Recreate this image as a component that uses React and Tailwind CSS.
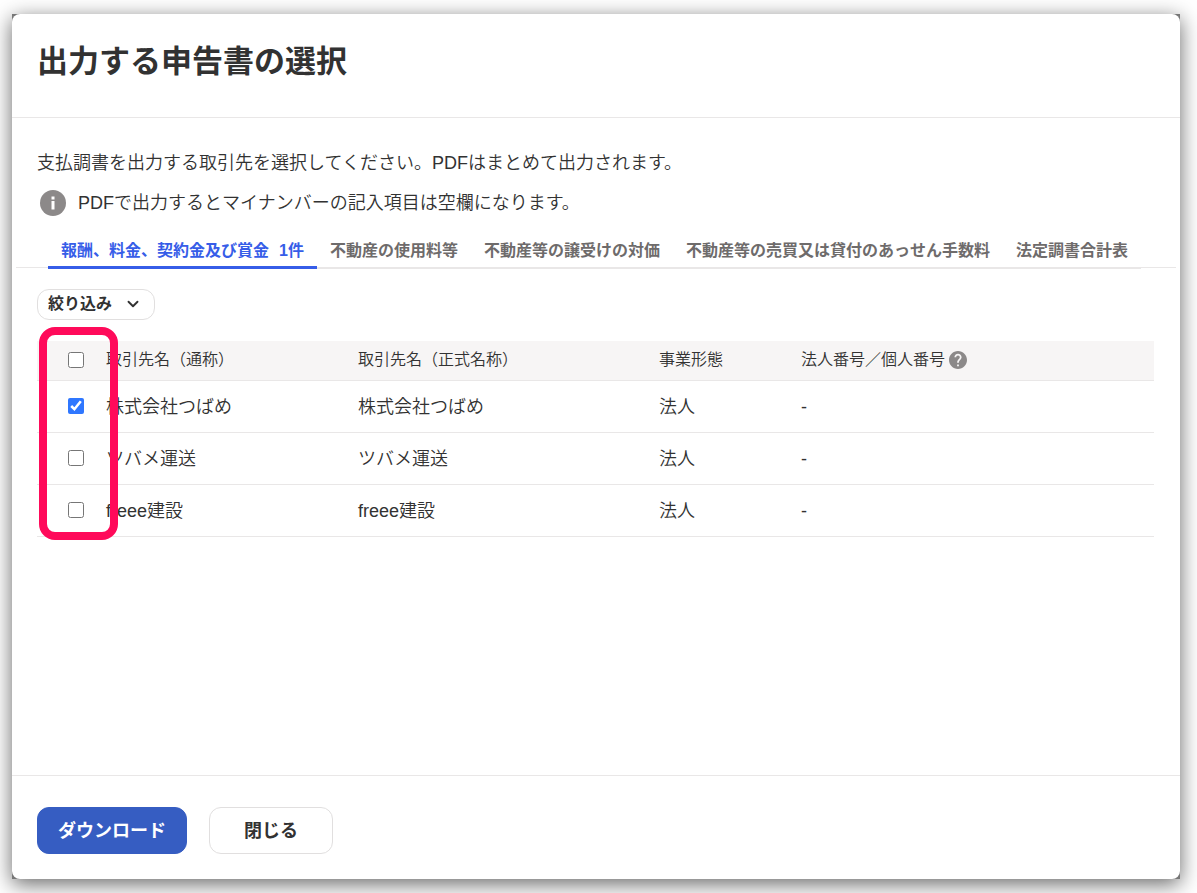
import { useState } from 'react';
import { ChevronDown } from 'lucide-react';

const tabs = [
  { id: 'fee', label: '報酬、料金、契約金及び賞金', count: '1件' },
  { id: 'rent', label: '不動産の使用料等' },
  { id: 'transfer', label: '不動産等の譲受けの対価' },
  { id: 'broker', label: '不動産等の売買又は貸付のあっせん手数料' },
  { id: 'total', label: '法定調書合計表' },
];

const partners = [
  { id: 1, name: '株式会社つばめ', official: '株式会社つばめ', type: '法人', number: '-' },
  { id: 2, name: 'ツバメ運送', official: 'ツバメ運送', type: '法人', number: '-' },
  { id: 3, name: 'freee建設', official: 'freee建設', type: '法人', number: '-' },
];

function InfoIcon() {
  return (
    <svg viewBox="0 0 26 26" className="w-[26px] h-[26px] shrink-0" aria-hidden="true">
      <circle cx="13" cy="13" r="13" fill="#8c8989" />
      <rect x="11.5" y="6.5" width="3" height="3" fill="#fff" />
      <rect x="11.5" y="11" width="3" height="8.5" fill="#fff" />
    </svg>
  );
}

function HelpIcon() {
  return (
    <svg viewBox="2 2 20 20" className="w-[18px] h-[18px]" aria-hidden="true">
      <path
        fill="#8c8989"
        d="M12 2C6.48 2 2 6.48 2 12s4.48 10 10 10 10-4.48 10-10S17.52 2 12 2zm1 17h-2v-2h2v2zm2.07-7.75-.9.92C13.45 12.9 13 13.5 13 15h-2v-.5c0-1.1.45-2.1 1.17-2.83l1.24-1.26c.37-.36.59-.86.59-1.41 0-1.1-.9-2-2-2s-2 .9-2 2H8c0-2.21 1.79-4 4-4s4 1.79 4 4c0 .88-.36 1.68-.93 2.25z"
      />
    </svg>
  );
}

export default function App() {
  const [activeTab, setActiveTab] = useState('fee');
  const [selected, setSelected] = useState([1]);

  const toggle = (id) =>
    setSelected(selected.includes(id) ? selected.filter(s => s !== id) : [...selected, id]);

  const toggleAll = () =>
    setSelected(selected.length === partners.length ? [] : partners.map(p => p.id));

  return (
    <div className="min-h-screen flex flex-col bg-white pt-3.5 pb-3.5 pl-3 pr-[17px] overflow-hidden text-[#323232] text-[18px] font-['Liberation_Sans','Noto_Sans_CJK_JP',sans-serif]">
      <div className="flex-1 flex flex-col bg-[#777777] shadow-[0_5px_20px_rgba(0,0,0,0.6)]">
        <div className="flex-1 flex flex-col bg-white rounded-lg">
          <header className="px-[25px] pt-6 pb-[31px] border-b border-[#e9e7e7]">
            <h1 className="text-[31px] leading-[48px] font-bold">出力する申告書の選択</h1>
          </header>

          <main className="flex-1 pt-[25px]">
            <div className="px-[25px] font-[350]">
              <p className="leading-10">支払調書を出力する取引先を選択してください。PDFはまとめて出力されます。</p>
              <p className="flex items-center gap-3 pl-[3px] leading-10">
                <InfoIcon />
                PDFで出力するとマイナンバーの記入項目は空欄になります。
              </p>
            </div>

            {/* Tabs */}
            <nav className="mt-[11px] mx-1 px-8 border-b border-[#e9e7e7]">
              <div role="tablist" className="flex -mb-0.5">
                {tabs.map(tab => (
                  <button
                    key={tab.id}
                    role="tab"
                    aria-selected={tab.id === activeTab}
                    onClick={() => setActiveTab(tab.id)}
                    className={
                      tab.id === activeTab
                        ? 'h-[35px] px-[13px] pt-0.5 flex items-center gap-2.5 border-b-[3px] border-[#365de8] text-[#365de8] text-[16px] font-bold whitespace-nowrap'
                        : 'h-[35px] px-[13px] pt-px flex items-center border-b-2 border-[#e9e7e7] text-[#6e6b6b] text-[16px] font-bold whitespace-nowrap'
                    }
                  >
                    <span>{tab.label}</span>
                    {tab.count && <span>{tab.count}</span>}
                  </button>
                ))}
              </div>
            </nav>

            <div className="pl-[25px] pr-[26px] pt-[21px]">
              <button className="h-[31px] pl-2.5 pr-3 pb-px flex items-center gap-3 border border-[#e1dfdf] rounded-xl text-[16px] font-bold">
                絞り込み
                <ChevronDown className="w-[18px] h-[18px]" strokeWidth={2.5} />
              </button>

              {/* Partner list */}
              <div className="relative mt-[21px]">
                <table className="w-full table-fixed border-collapse text-left font-[350]">
                  <thead>
                    <tr className="h-[39px] bg-[#f7f5f5] border-b border-[#e9e7e7] text-[16px]">
                      <th className="w-[69px] pl-[31px]">
                        <input
                          type="checkbox"
                          aria-label="すべて選択"
                          className="block w-4 h-4 accent-[#2f77ff]"
                          checked={selected.length === partners.length}
                          onChange={toggleAll}
                        />
                      </th>
                      <th className="w-[252px] font-[350]">取引先名（通称）</th>
                      <th className="w-[301px] font-[350]">取引先名（正式名称）</th>
                      <th className="w-[142px] font-[350]">事業形態</th>
                      <th className="font-[350]">
                        <span className="flex items-center gap-1">
                          法人番号／個人番号
                          <HelpIcon />
                        </span>
                      </th>
                    </tr>
                  </thead>
                  <tbody>
                    {partners.map(p => (
                      <tr key={p.id} className="h-[52px] border-b border-[#e9e7e7]">
                        <td className="pl-[31px]">
                          <input
                            type="checkbox"
                            aria-label={p.name}
                            className="block w-4 h-4 accent-[#2f77ff]"
                            checked={selected.includes(p.id)}
                            onChange={() => toggle(p.id)}
                          />
                        </td>
                        <td className="pt-0.5">{p.name}</td>
                        <td className="pt-0.5">{p.official}</td>
                        <td className="pt-0.5">{p.type}</td>
                        <td className="pt-0.5">{p.number}</td>
                      </tr>
                    ))}
                  </tbody>
                </table>

                {/* Highlight around the checkbox column */}
                <div className="absolute left-0.5 -top-3.5 -bottom-[3px] w-[79px] border-8 border-[#ff0a5a] rounded-2xl pointer-events-none" />
              </div>
            </div>
          </main>

          <footer className="flex gap-[22px] px-[25px] pt-[31px] pb-[25px] border-t border-[#e9e7e7]">
            <button className="h-[47px] px-5 pt-0.5 rounded-xl border border-[#365dc2] bg-[#365dc2] text-white font-bold">
              ダウンロード
            </button>
            <button className="h-[47px] px-[34px] pt-0.5 rounded-xl border border-[#e1dfdf] bg-white font-bold">
              閉じる
            </button>
          </footer>
        </div>
      </div>
    </div>
  );
}
